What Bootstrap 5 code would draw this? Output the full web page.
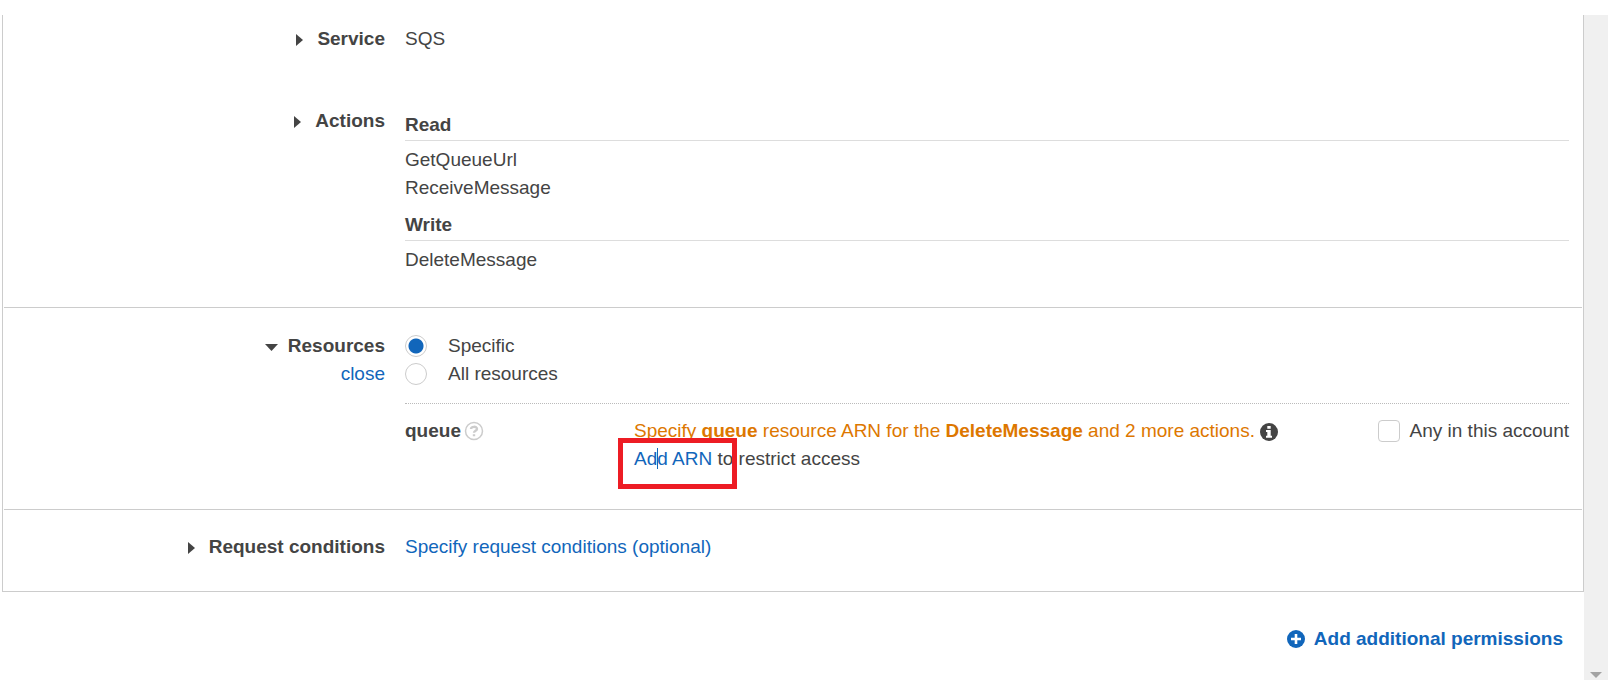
<!DOCTYPE html>
<html lang="en">
<head>
<meta charset="utf-8">
<meta name="viewport" content="width=device-width, initial-scale=1">
<title>Create policy</title>
<link href="https://cdn.jsdelivr.net/npm/bootstrap@5.3.0/dist/css/bootstrap.min.css" rel="stylesheet">
<style>
body { font: 19px/28px "Liberation Sans", Arial, sans-serif; color: #444; background: #fff; }
a, .add-btn { color: #1166bb; text-decoration: none; }
.page { padding-top: 15px; min-height: 100vh; }
.editor { border: 1px solid #ccc; border-top: 0; margin-left: 2px; padding: 0 1px; }
.scroll-rail { width: 24px; background: #f0f0f0; }
.scroll-rail svg { margin-bottom: 2px; }
.sec { padding: 24px 13px 36px 0; }
.sec + .sec { border-top: 1px solid #ccc; }
.sec-first { padding-top: 10px; padding-bottom: 33px; }
.sec.sec-last { padding-top: 23px; padding-bottom: 30px; }
.sec-row { display: grid; grid-template-columns: 381px minmax(0, 1fr); column-gap: 20px; }
.service-row { margin-bottom: 54px; }
.toggle { border: 0; background: none; padding: 0; font-weight: 700; color: inherit; display: flex; align-items: center; gap: 14px; margin-left: auto; }
.toggle svg { margin-top: 2px; }
.caret-down-gap { gap: 10px; }
.access { font-size: inherit; line-height: inherit; font-weight: 700; margin: 0 0 5px; padding-bottom: 1px; border-bottom: 1px solid #ddd; }
.actions-col { padding-top: 4px; }
.action-list + .access { margin-top: 9px; }
.choice { gap: 21px; }
.form-check-input.ctl { width: 22px; height: 22px; margin: 0; border: 1px solid #ccc; background-color: #fff; flex: none; }
.form-check-input.ctl[type=checkbox] { border-radius: 4px; }
.form-check-input.ctl[type=radio]:checked { background-image: radial-gradient(circle, #1166bb 0 7px, transparent 8px); background-size: 100% 100%; }
.arn-row { display: grid; grid-template-columns: 229px minmax(0, 1fr) auto; border-top: 1px dotted #bbb; margin-top: 15px; padding-top: 13px; }
.help { margin: 4px 0 0 3px; }
.any-choice { gap: 10px; }
.warn { color: #dd7700; }
.marked::after { content: ""; position: absolute; left: -16px; top: -10px; width: 119px; height: 51px; border: 5px solid #ed1c24; pointer-events: none; }
.text-caret { position: absolute; left: 23px; top: 0; width: 1px; height: 21px; background: #1166bb; }
.add-btn { border: 0; background: none; padding: 0; font-weight: 700; gap: 9px; }
.page-foot { padding: 33px 21px 0 0; }
</style>
</head>
<body>
<div class="page d-flex">
  <main class="flex-grow-1">
    <div class="editor">
      <section class="sec sec-first">
        <div class="sec-row service-row">
          <div><button class="toggle" type="button"><svg width="7" height="12" viewBox="0 0 7 12" fill="currentColor"><path d="M0 0 7 6 0 12Z"/></svg>Service</button></div>
          <div>SQS</div>
        </div>
        <div class="sec-row">
          <div><button class="toggle" type="button"><svg width="7" height="12" viewBox="0 0 7 12" fill="currentColor"><path d="M0 0 7 6 0 12Z"/></svg>Actions</button></div>
          <div class="actions-col">
            <h3 class="access">Read</h3>
            <ul class="list-unstyled mb-0 action-list"><li>GetQueueUrl</li><li>ReceiveMessage</li></ul>
            <h3 class="access">Write</h3>
            <ul class="list-unstyled mb-0 action-list"><li>DeleteMessage</li></ul>
          </div>
        </div>
      </section>
      <section class="sec">
        <div class="sec-row">
          <div>
            <button class="toggle caret-down-gap" type="button"><svg width="13" height="7" viewBox="0 0 13 7" fill="currentColor"><path d="M0 0H13L6.500 7Z"/></svg>Resources</button>
            <div class="text-end"><a href="#">close</a></div>
          </div>
          <div>
            <div class="d-flex align-items-center choice"><input class="form-check-input ctl" type="radio" name="scope" id="specific" checked><label for="specific">Specific</label></div>
            <div class="d-flex align-items-center choice"><input class="form-check-input ctl" type="radio" name="scope" id="all"><label for="all">All resources</label></div>
            <div class="arn-row">
              <div class="d-flex align-items-start"><strong>queue</strong>
                <svg class="help" width="20" height="20" viewBox="0 0 20 20" fill="none" stroke="#ccc"><circle cx="10" cy="10" r="8.5" stroke-width="1.5"/><path d="M7 8C7 5.2 13 5 13 8C13 9.8 10 9.8 10 11.800M10 13.200V15.200" stroke-width="2.4"/></svg>
              </div>
              <div>
                <div class="warn">Specify <strong>queue</strong> resource ARN for the <strong>DeleteMessage</strong> and 2 more actions.
                  <svg width="18" height="18" viewBox="0 0 18 18"><circle cx="9" cy="9" r="9" fill="#444"/><path fill="#fff" d="M7.300 3h3.400v2.700H7.300ZM6 7h4.700v5.700H12v2H6v-2h1.300V9H6Z"/></svg>
                </div>
                <div><span class="position-relative marked"><a href="#">Add ARN</a><span class="text-caret"></span></span> to restrict access</div>
              </div>
              <div class="d-flex align-items-start"><span class="d-flex align-items-center any-choice"><input class="form-check-input ctl" type="checkbox" id="any"><label for="any">Any in this account</label></span></div>
            </div>
          </div>
        </div>
      </section>
      <section class="sec sec-last">
        <div class="sec-row">
          <div><button class="toggle" type="button"><svg width="7" height="12" viewBox="0 0 7 12" fill="currentColor"><path d="M0 0 7 6 0 12Z"/></svg>Request conditions</button></div>
          <div><a href="#">Specify request conditions (optional)</a></div>
        </div>
      </section>
    </div>
    <div class="page-foot d-flex justify-content-end">
      <button class="add-btn d-flex align-items-center" type="button"><svg width="18" height="18" viewBox="0 0 18 18"><circle cx="9" cy="9" r="9" fill="currentColor"/><path d="M9 4V14M4 9H14" stroke="#fff" stroke-width="2.6"/></svg>Add additional permissions</button>
    </div>
  </main>
  <div class="scroll-rail d-flex align-items-end justify-content-center"><svg width="12" height="6" viewBox="0 0 12 6" fill="#a3a3a3"><path d="M0 0H12L6 6Z"/></svg></div>
</div>
<script src="https://cdn.jsdelivr.net/npm/bootstrap@5.3.0/dist/js/bootstrap.bundle.min.js"></script>
</body>
</html>
